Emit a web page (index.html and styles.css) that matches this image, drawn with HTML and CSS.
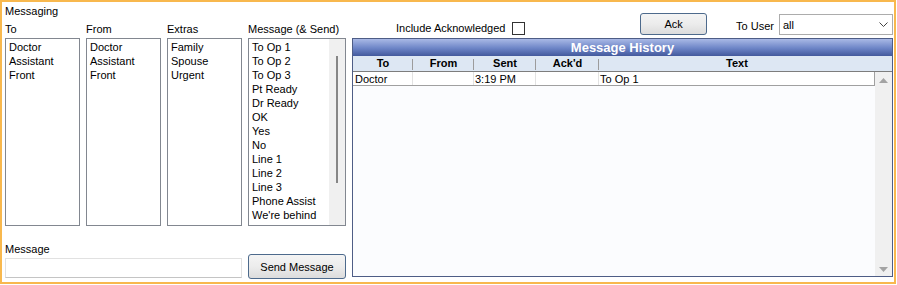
FILE: index.html
```html
<!DOCTYPE html>
<html lang="en">
<head>
  <meta charset="UTF-8" />
  <meta name="viewport" content="width=device-width, initial-scale=1.0" />
  <title>Messaging</title>
  <link rel="stylesheet" href="styles.css">
</head>
<body>
<div class="frame">

  <!-- Compose side: pick recipients, sender, extras and message -->
  <div class="compose">
    <div class="caption title">Messaging</div>
    <div class="lists">
      <div class="list-group">
        <div class="caption">To</div>
        <ul class="list-box">
          <li>Doctor</li>
          <li>Assistant</li>
          <li>Front</li>
        </ul>
      </div>
      <div class="list-group">
        <div class="caption">From</div>
        <ul class="list-box">
          <li>Doctor</li>
          <li>Assistant</li>
          <li>Front</li>
        </ul>
      </div>
      <div class="list-group">
        <div class="caption">Extras</div>
        <ul class="list-box">
          <li>Family</li>
          <li>Spouse</li>
          <li>Urgent</li>
        </ul>
      </div>
      <div class="list-group">
        <div class="caption">Message (&amp; Send)</div>
        <div class="list-box wide">
          <ul class="items">
            <li>To Op 1</li>
            <li>To Op 2</li>
            <li>To Op 3</li>
            <li>Pt Ready</li>
            <li>Dr Ready</li>
            <li>OK</li>
            <li>Yes</li>
            <li>No</li>
            <li>Line 1</li>
            <li>Line 2</li>
            <li>Line 3</li>
            <li>Phone Assist</li>
            <li>We're behind</li>
            <li>I'll be right there</li>
          </ul>
          <div class="thin-scroll"><div class="thumb"></div></div>
        </div>
      </div>
    </div>
    <div class="send-row">
      <div class="message-field">
        <div class="caption">Message</div>
        <div class="text-input"></div>
      </div>
      <button class="btn send">Send Message</button>
    </div>
  </div>

  <!-- History side -->
  <div class="history-side">
    <div class="toolbar">
      <div class="ack-filter">
        <span class="caption">Include Acknowledged</span>
        <span class="check"></span>
      </div>
      <div class="user-filter">
        <button class="btn ack">Ack</button>
        <span class="caption to-user">To User</span>
        <div class="combo">
          <span>all</span>
          <svg width="9" height="5" viewBox="0 0 9 5"><path d="M0.5 0.5 L4.5 4.5 L8.5 0.5" fill="none" stroke="#444" stroke-width="1"/></svg>
        </div>
      </div>
    </div>

    <div class="history">
      <div class="history-title">Message History</div>
      <div class="history-head">
        <div class="head-cell c-to">To</div>
        <div class="head-cell c-from">From</div>
        <div class="head-cell c-sent">Sent</div>
        <div class="head-cell c-ack">Ack'd</div>
        <div class="head-cell c-text">Text</div>
        <div class="head-cell c-bar"></div>
      </div>
      <div class="history-body">
        <div class="rows">
          <div class="row">
            <div class="cell c-to">Doctor</div>
            <div class="cell c-from"></div>
            <div class="cell c-sent">3:19 PM</div>
            <div class="cell c-ack"></div>
            <div class="cell c-text">To Op 1</div>
          </div>
        </div>
        <div class="vscroll">
          <svg width="9" height="5" viewBox="0 0 9 5"><path d="M0 5 L4.5 0 L9 5 Z" fill="#a3a3a3"/></svg>
          <svg width="9" height="5" viewBox="0 0 9 5"><path d="M0 0 L9 0 L4.5 5 Z" fill="#a3a3a3"/></svg>
        </div>
      </div>
    </div>
  </div>

</div>
</body>
</html>
```

FILE: styles.css
```css
/* Base */
body {
  margin: 0;
  font-family: "Liberation Sans", Arial, sans-serif;
  font-size: 11px;
  color: #000;
  background: #fff;
}
.frame {
  width: 896px;
  height: 284px;
  box-sizing: border-box;
  border: 2px solid #f8b84e;
  padding: 0 1px 0 3px;
  display: flex;
  gap: 6px;
  background: #fff;
}
.caption {
  line-height: 13px;
  height: 13px;
  white-space: nowrap;
}

/* Compose side */
.compose {
  width: 341px;
  display: flex;
  flex-direction: column;
}
.compose .title {
  margin-top: 3px;
}
.lists {
  display: flex;
  gap: 6px;
  margin-top: 5px;
}
.list-group {
  display: flex;
  flex-direction: column;
}
.list-group .caption {
  margin-bottom: 2px;
}
.list-box {
  margin: 0;
  padding: 1px 0 0 3px;
  list-style: none;
  width: 75px;
  height: 188px;
  box-sizing: border-box;
  border: 1px solid #828790;
  overflow: hidden;
  background: #fff;
}
.list-box li {
  height: 14px;
  line-height: 14px;
  white-space: nowrap;
}
.list-box.wide {
  width: 98px;
  padding: 0;
  display: flex;
}
.list-box .items {
  flex: 1;
  margin: 0;
  padding: 1px 0 0 3px;
  list-style: none;
  overflow: hidden;
}
.thin-scroll {
  width: 16px;
  background: #f0f0f0;
}
.thin-scroll .thumb {
  width: 2px;
  height: 127px;
  margin: 17px 0 0 7px;
  background: #868686;
}
.send-row {
  display: flex;
  gap: 6px;
  margin-top: 17px;
}
.message-field {
  width: 237px;
  display: flex;
  flex-direction: column;
}
.message-field .caption {
  margin-bottom: 2px;
}
.text-input {
  height: 20px;
  box-sizing: border-box;
  border: 1px solid #e1e1e1;
  border-bottom-color: #c4c4c4;
  background: #fff;
}

/* Buttons */
.btn {
  padding: 0;
  box-sizing: border-box;
  font-family: inherit;
  font-size: 11px;
  color: #000;
  border: 1px solid #4d6a8c;
  border-radius: 3px;
  background: linear-gradient(#f4f4f4, #ececec 50%, #dcdcdc);
}
.btn.send {
  width: 98px;
  height: 25px;
  margin-top: 11px;
  line-height: 24px;
}
.btn.ack {
  width: 67px;
  height: 22px;
  margin-top: 11px;
  line-height: 20px;
}

/* History side */
.history-side {
  width: 541px;
  display: flex;
  flex-direction: column;
}
.toolbar {
  height: 36px;
  display: flex;
  align-items: flex-start;
}
.ack-filter {
  display: flex;
  margin: 20px 0 0 44px;
}
.check {
  width: 13px;
  height: 13px;
  box-sizing: border-box;
  margin-left: 7px;
  border: 1px solid #333;
  background: #fff;
}
.user-filter {
  display: flex;
  align-items: flex-start;
  margin-left: auto;
}
.to-user {
  margin: 18px 0 0 29px;
}
.combo {
  width: 114px;
  height: 21px;
  box-sizing: border-box;
  margin: 12px 0 0 5px;
  padding: 2px 4px 0 3px;
  border: 1px solid #acacac;
  background: #fff;
  display: flex;
  justify-content: space-between;
  align-items: center;
  line-height: 17px;
}
.combo svg {
  margin-top: -2px;
}

/* Message history grid */
.history {
  height: 239px;
  box-sizing: border-box;
  border: 1px solid #4e5d86;
  background: #fbfcfe;
  display: flex;
  flex-direction: column;
}
.history-title {
  height: 17px;
  line-height: 18px;
  overflow: hidden;
  text-align: center;
  font-size: 13px;
  font-weight: bold;
  color: #fff;
  background: linear-gradient(#a9b9e6, #6c84c6 55%, #43599c);
}
.history-head {
  height: 15px;
  display: flex;
  background: #dde7f3;
  border-bottom: 1px solid #7d7d7d;
}
.head-cell {
  position: relative;
  line-height: 15px;
  text-align: center;
  font-weight: bold;
  box-sizing: border-box;
}
.head-cell.c-to::after,
.head-cell.c-from::after,
.head-cell.c-sent::after,
.head-cell.c-ack::after {
  content: "";
  position: absolute;
  right: 0;
  top: 3px;
  width: 1px;
  height: 11px;
  background: #9c9c9c;
}
.c-to { width: 60px; }
.c-from { width: 61px; }
.c-sent { width: 62px; }
.c-ack { width: 63px; }
.c-text { width: 276px; }
.c-bar { width: 17px; }

.history-body {
  flex: 1;
  display: flex;
}
.rows {
  width: 522px;
}
.row {
  display: flex;
  height: 14px;
  box-sizing: border-box;
  border-bottom: 1px solid #a0a0a0;
  background: #fff;
}
.cell {
  box-sizing: border-box;
  height: 13px;
  line-height: 14px;
  overflow: hidden;
  white-space: nowrap;
  padding-left: 2px;
  border-right: 1px solid #e2e2e2;
}
.cell.c-sent,
.cell.c-ack,
.cell.c-text {
  padding-left: 1px;
}
.cell.c-text {
  border-right-color: #a0a0a0;
}
.vscroll {
  width: 17px;
  background: #f0f0f0;
  display: flex;
  flex-direction: column;
  justify-content: space-between;
  align-items: center;
  padding: 6px 0 4px;
  box-sizing: border-box;
}
```
